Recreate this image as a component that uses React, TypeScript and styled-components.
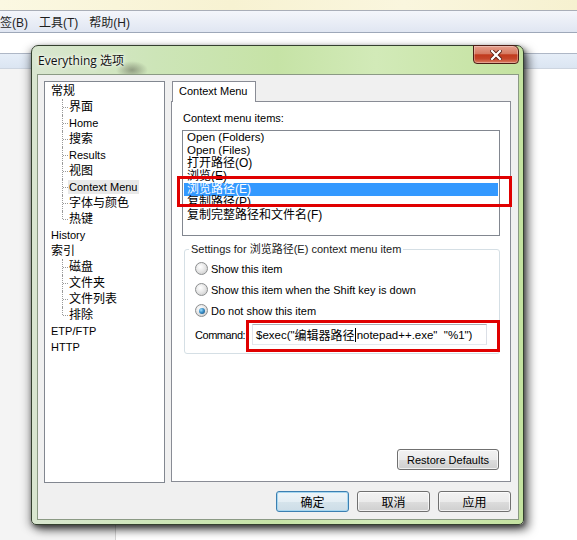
import React from "react";
import styled, { createGlobalStyle, css } from "styled-components";

const GlobalStyle = createGlobalStyle`
  html, body { margin: 0; padding: 0; }
  body {
    background: #fff;
    font-family: "Liberation Sans", "Noto Sans CJK SC", sans-serif;
    font-size: 11px;
    color: #000;
  }
  * { box-sizing: border-box; }
`;

const Page = styled.div`
  position: relative;
  width: 577px;
  height: 540px;
  overflow: hidden;
  display: flex;
  flex-direction: column;
  background: #fff;
`;

const TopStrip = styled.div`
  flex: none;
  height: 11px;
  background: linear-gradient(90deg, #fbf8e2 0%, #f7f2d2 40%, #faf6de 70%, #f6f1d0 100%);
  border-bottom: 1px solid #a9aeb8;
`;

const MenuBar = styled.div`
  flex: none;
  height: 22px;
  display: flex;
  align-items: center;
  gap: 11px;
  background: linear-gradient(#f4f6fb, #e0e6f2);
  border-bottom: 1px solid #9ea8b9;
  font-size: 12px;
  color: #1e1e1e;
`;

const MenuItem = styled.span`
  white-space: nowrap;
`;

const Spacer = styled.div`
  flex: none;
  height: 20px;
`;

const HeaderBand = styled.div`
  flex: none;
  height: 16px;
  border-top: 1px solid #aeb7c6;
  border-bottom: 1px solid #cdd5e0;
  background: linear-gradient(#e6eef8, #dbe5f2);
`;

const Body = styled.div`
  flex: 1;
  display: flex;
`;

const LeftPane = styled.div`
  width: 116px;
  background: #f4f4f4;
  border-right: 1px solid #d3d3d3;
`;

const RightPane = styled.div`
  flex: 1;
  background: #fff;
`;

/* ---------- dialog ---------- */

const Dialog = styled.div`
  position: absolute;
  left: 31px;
  top: 45px;
  width: 493px;
  height: 480px;
  border: 1px solid #34402f;
  border-radius: 7px 7px 5px 5px;
  padding: 0 4px 4px 5px;
  display: flex;
  flex-direction: column;
  background:
    radial-gradient(ellipse 16px 9px at 100px 24px, rgba(70, 70, 60, 0.45), rgba(70, 70, 60, 0) 100%),
    linear-gradient(90deg, #d9e6d0 0%, #cde5b8 25%, #c6e3a6 50%, #d2eab8 70%, #c4e2a0 100%);
  box-shadow: 5px 5px 10px rgba(0, 0, 0, 0.55), 1px 2px 4px rgba(0, 0, 0, 0.4),
    -3px 3px 8px rgba(0, 0, 0, 0.25);
`;

const TitleBar = styled.div`
  flex: none;
  height: 28px;
  display: flex;
  align-items: flex-start;
  justify-content: space-between;
`;

const Title = styled.span`
  align-self: center;
  padding-left: 1px;
  font-family: "Open Sans", "Noto Sans CJK SC", sans-serif;
  font-size: 12px;
  color: #111;
  text-shadow: 0 0 6px #fff, 0 0 3px #fff;
`;

const CloseButton = styled.div`
  width: 46px;
  height: 19px;
  margin-top: -1px;
  border: 1px solid #4b1d14;
  border-radius: 0 6px 4px 4px;
  background: linear-gradient(#e6a08d 0%, #d67a62 45%, #c13a1d 52%, #c5462a 75%, #dc8064 100%);
  box-shadow: inset 0 0 0 1px rgba(255, 255, 255, 0.3);
  display: flex;
  align-items: center;
  justify-content: center;
`;

const Client = styled.div`
  flex: 1;
  border: 1px solid #8b9a84;
  background: #f0f0f0;
  display: flex;
  flex-direction: column;
  gap: 8px;
  padding: 6px 7px 7px 6px;
`;

const MainRow = styled.div`
  flex: 1;
  display: flex;
  gap: 6px;
`;

/* ---------- tree ---------- */

const Tree = styled.div`
  width: 122px;
  border: 1px solid #828790;
  background: #fff;
  padding-top: 1px;
`;

const TreeRow = styled.div<{ $child?: boolean; $last?: boolean }>`
  position: relative;
  height: 16px;
  display: flex;
  align-items: center;
  padding-left: ${(p) => (p.$child ? 24 : 6)}px;
  white-space: nowrap;
  ${(p) =>
    p.$child &&
    css`
      &::before {
        content: "";
        position: absolute;
        left: 17px;
        top: 0;
        height: ${p.$last ? 8 : 16}px;
        border-left: 1px dotted #9a9a9a;
      }
      &::after {
        content: "";
        position: absolute;
        left: 18px;
        top: 8px;
        width: 5px;
        border-top: 1px dotted #9a9a9a;
      }
    `}
`;

const TreeLabel = styled.span<{ $cjk?: boolean; $selected?: boolean }>`
  font-size: ${(p) => (p.$cjk ? 12 : 11)}px;
  line-height: 14px;
  ${(p) =>
    p.$selected &&
    css`
      background: #e8e8e8;
      margin-left: -1px;
      padding: 0 2px 0 1px;
    `}
`;

/* ---------- tab ---------- */

const TabArea = styled.div`
  flex: 1;
  display: flex;
  flex-direction: column;
  margin-bottom: 1px;
`;

const TabStrip = styled.div`
  display: flex;
  position: relative;
  z-index: 1;
  margin-bottom: -1px;
`;

const Tab = styled.div`
  margin-left: 1px;
  width: 84px;
  height: 21px;
  border: 1px solid #898c95;
  border-bottom: none;
  background: #fff;
  padding-left: 6px;
  line-height: 19px;
  font-size: 11px;
  white-space: nowrap;
`;

const Panel = styled.div`
  flex: 1;
  border: 1px solid #898c95;
  background: #fff;
  display: flex;
  flex-direction: column;
  padding: 0 10px 11px 10px;
`;

const FieldLabel = styled.div`
  margin-top: 9px;
  padding-left: 1px;
  line-height: 14px;
`;

const ListBox = styled.div`
  margin-top: 5px;
  width: 318px;
  height: 106px;
  border: 1px solid #828790;
  padding: 0 1px;
  background: #fff;
`;

const ListItem = styled.div<{ $cjk?: boolean; $selected?: boolean }>`
  height: 13px;
  line-height: 13px;
  padding-left: 3px;
  white-space: nowrap;
  font-size: ${(p) => (p.$cjk ? 12 : 11.5)}px;
  ${(p) =>
    p.$selected &&
    css`
      background: #3399ff;
      color: #fff;
    `}
`;

const GroupBox = styled.fieldset`
  margin: 6px 0 0 2px;
  width: 316px;
  border: 1px solid #d5dfe5;
  border-radius: 3px;
  padding: 2px 4px 8px 4px;
  min-width: 0;
`;

const Legend = styled.legend`
  padding: 0 2px;
  line-height: 14px;
  font-size: 11px;
  color: #1a1a1a;
  white-space: nowrap;
`;

const RadioRow = styled.div`
  height: 21px;
  display: flex;
  align-items: center;
  gap: 3px;
  padding-left: 6px;
`;

const Radio = styled.span<{ $checked?: boolean }>`
  position: relative;
  width: 13px;
  height: 13px;
  border-radius: 50%;
  border: 1px solid #8c8e8f;
  background: radial-gradient(circle at 40% 35%, #ffffff 0%, #e8e8e8 45%, #c4c4c4 100%);
  ${(p) =>
    p.$checked &&
    css`
      &::after {
        content: "";
        position: absolute;
        left: 2.5px;
        top: 2.5px;
        width: 6px;
        height: 6px;
        border-radius: 50%;
        background: radial-gradient(circle at 35% 35%, #9fe0ff 0%, #3a8fc8 45%, #17446e 100%);
      }
    `}
`;

const CommandRow = styled.div`
  margin-top: 3px;
  height: 21px;
  display: flex;
  align-items: center;
  padding-left: 6px;
`;

const CommandLabel = styled.span`
  width: 57px;
  white-space: nowrap;
  letter-spacing: -0.45px;
`;

const TextInput = styled.div`
  width: 235px;
  height: 21px;
  border: 1px solid;
  border-color: #abadb3 #dbdfe6 #e3e9ef #e2e3ea;
  padding-left: 3px;
  display: flex;
  align-items: center;
  white-space: pre;
  font-size: 11.5px;
  background: #fff;
`;

const Cjk = styled.span`
  font-size: 12px;
`;

const Caret = styled.span`
  display: inline-block;
  width: 1px;
  height: 14px;
  background: #000;
  margin: 0 1px 0 0;
`;

const Button = styled.button<{ $default?: boolean; $w: number; $cjk?: boolean }>`
  width: ${(p) => p.$w}px;
  height: 21px;
  padding: 0;
  border: 1px solid #707070;
  border-radius: 3px;
  font-family: "Liberation Sans", "Noto Sans CJK SC", sans-serif;
  font-size: ${(p) => (p.$cjk ? 12 : 11)}px;
  color: #000;
  background: linear-gradient(#f2f2f2 0%, #ebebeb 50%, #dddddd 51%, #cfcfcf 100%);
  box-shadow: inset 0 0 0 1px rgba(255, 255, 255, 0.7);
  ${(p) =>
    p.$default &&
    css`
      border-color: #3c7fb1;
      background: linear-gradient(#eef5f9 0%, #e4eef4 50%, #d6e4ec 51%, #cddde7 100%);
      box-shadow: inset 0 0 0 1px #a7d7f0;
    `}
`;

const RestoreButton = styled(Button)`
  margin-top: auto;
  align-self: flex-end;
  margin-right: 1px;
`;

const ButtonRow = styled.div`
  flex: none;
  display: flex;
  justify-content: flex-end;
  gap: 8px;
`;

const Annotation = styled.div<{ $x: number; $y: number; $w: number; $h: number }>`
  position: absolute;
  left: ${(p) => p.$x}px;
  top: ${(p) => p.$y}px;
  width: ${(p) => p.$w}px;
  height: ${(p) => p.$h}px;
  border: 3px solid #e00000;
  pointer-events: none;
`;

type TreeNode = { label: string; child?: boolean; cjk?: boolean; last?: boolean; selected?: boolean };

const treeNodes: TreeNode[] = [
  { label: "常规", cjk: true },
  { label: "界面", child: true, cjk: true },
  { label: "Home", child: true },
  { label: "搜索", child: true, cjk: true },
  { label: "Results", child: true },
  { label: "视图", child: true, cjk: true },
  { label: "Context Menu", child: true, selected: true },
  { label: "字体与颜色", child: true, cjk: true },
  { label: "热键", child: true, cjk: true, last: true },
  { label: "History" },
  { label: "索引", cjk: true },
  { label: "磁盘", child: true, cjk: true },
  { label: "文件夹", child: true, cjk: true },
  { label: "文件列表", child: true, cjk: true },
  { label: "排除", child: true, cjk: true, last: true },
  { label: "ETP/FTP" },
  { label: "HTTP" },
];

const listItems: { label: string; cjk?: boolean; selected?: boolean }[] = [
  { label: "Open (Folders)" },
  { label: "Open (Files)" },
  { label: "打开路径(O)", cjk: true },
  { label: "浏览(E)", cjk: true },
  { label: "浏览路径(E)", cjk: true, selected: true },
  { label: "复制路径(P)", cjk: true },
  { label: "复制完整路径和文件名(F)", cjk: true },
];

const radios = [
  { label: "Show this item", checked: false },
  { label: "Show this item when the Shift key is down", checked: false },
  { label: "Do not show this item", checked: true },
];

const CloseIcon = () => (
  <svg width="12" height="10" viewBox="0 0 12 10">
    <path d="M2 1 L10 9 M10 1 L2 9" stroke="#5a2015" strokeWidth="4" strokeLinecap="square" />
    <path d="M2 1 L10 9 M10 1 L2 9" stroke="#ffffff" strokeWidth="2.2" strokeLinecap="square" />
  </svg>
);

export default function App() {
  return (
    <Page>
      <GlobalStyle />
      <TopStrip />
      <MenuBar>
        <MenuItem>签(B)</MenuItem>
        <MenuItem>工具(T)</MenuItem>
        <MenuItem>帮助(H)</MenuItem>
      </MenuBar>
      <Spacer />
      <HeaderBand />
      <Body>
        <LeftPane />
        <RightPane />
      </Body>

      <Dialog>
        <TitleBar>
          <Title>Everything 选项</Title>
          <CloseButton>
            <CloseIcon />
          </CloseButton>
        </TitleBar>
        <Client>
          <MainRow>
            <Tree>
              {treeNodes.map((n) => (
                <TreeRow key={n.label} $child={n.child} $last={n.last}>
                  <TreeLabel $cjk={n.cjk} $selected={n.selected}>
                    {n.label}
                  </TreeLabel>
                </TreeRow>
              ))}
            </Tree>
            <TabArea>
              <TabStrip>
                <Tab>Context Menu</Tab>
              </TabStrip>
              <Panel>
                <FieldLabel>Context menu items:</FieldLabel>
                <ListBox>
                  {listItems.map((it) => (
                    <ListItem key={it.label} $cjk={it.cjk} $selected={it.selected}>
                      {it.label}
                    </ListItem>
                  ))}
                </ListBox>
                <GroupBox>
                  <Legend>Settings for 浏览路径(E) context menu item</Legend>
                  {radios.map((r) => (
                    <RadioRow key={r.label}>
                      <Radio $checked={r.checked} />
                      <span>{r.label}</span>
                    </RadioRow>
                  ))}
                  <CommandRow>
                    <CommandLabel>Command:</CommandLabel>
                    <TextInput>
                      {'$exec("'}
                      <Cjk>编辑器路径</Cjk>
                      <Caret />
                      {'notepad++.exe"  "%1")'}
                    </TextInput>
                  </CommandRow>
                </GroupBox>
                <RestoreButton $w={102}>Restore Defaults</RestoreButton>
              </Panel>
            </TabArea>
          </MainRow>
          <ButtonRow>
            <Button $w={73} $cjk $default>
              确定
            </Button>
            <Button $w={73} $cjk>
              取消
            </Button>
            <Button $w={73} $cjk>
              应用
            </Button>
          </ButtonRow>
        </Client>
      </Dialog>

      <Annotation $x={177} $y={176} $w={335} $h={31} />
      <Annotation $x={246} $y={320} $w={254} $h={32} />
    </Page>
  );
}
